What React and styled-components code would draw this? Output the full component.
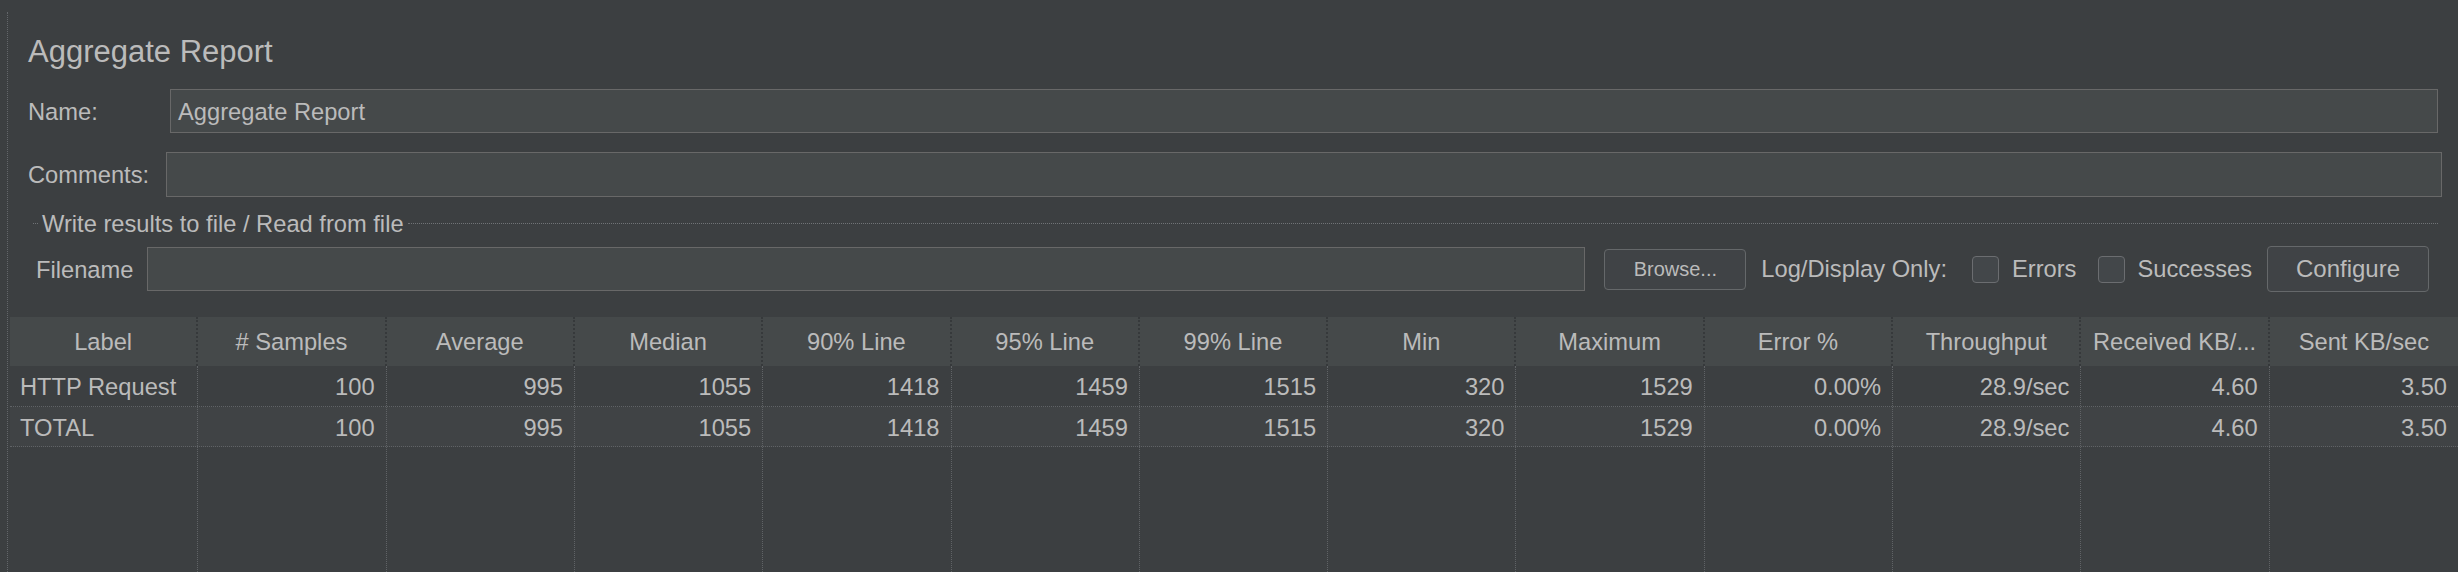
import React from 'react';
import styled, { createGlobalStyle } from 'styled-components';

const GlobalStyle = createGlobalStyle`
  html, body {
    margin: 0;
    padding: 0;
    background: #3c3f41;
  }
  body {
    font-family: "Liberation Sans", Arial, sans-serif;
    color: #bbbbbb;
  }
`;

const Page = styled.div`
  display: flex;
  height: 572px;
  padding: 12px 0 0 7px;
  box-sizing: border-box;
  overflow: hidden;
`;
const Panel = styled.div`
  flex: 1;
  display: flex;
  flex-direction: column;
  min-width: 0;
  border-left: 1px dotted #63666a;
`;
const Form = styled.div`
  display: flex;
  flex-direction: column;
  padding: 22px 0 0 20px;
`;
const Title = styled.div`
  height: 36px;
  font-size: 31px;
  line-height: 36px;
`;
const FieldRow = styled.div`
  display: flex;
  align-items: center;
  margin-top: ${(p) => p.$top}px;
  margin-right: ${(p) => p.$right}px;
  margin-left: ${(p) => p.$left || 0}px;
`;
const FieldLabel = styled.div`
  flex-shrink: 0;
  width: ${(p) => p.$width}px;
  padding-top: 2px;
  font-size: 23.7px;
  white-space: nowrap;
`;
const TextField = styled.div`
  flex: 1;
  display: flex;
  align-items: center;
  height: ${(p) => p.$height}px;
  box-sizing: border-box;
  padding: 2px 0 0 7px;
  background: #45494a;
  border: 1px solid #686868;
  font-size: 23.7px;
`;
const GroupTitle = styled.div`
  display: flex;
  align-items: center;
  height: 26px;
  margin-top: 13px;
  margin-right: 20px;
`;
const GroupDash = styled.div`
  width: 5px;
  margin-left: 5px;
  border-top: 1px dotted #707376;
`;
const GroupText = styled.div`
  margin: 0 4px;
  padding-top: 2px;
  font-size: 23.7px;
  line-height: 26px;
  white-space: nowrap;
`;
const GroupLine = styled.div`
  flex: 1;
  border-top: 1px dotted #707376;
`;
const Button = styled.div`
  flex-shrink: 0;
  display: flex;
  align-items: center;
  justify-content: center;
  width: ${(p) => p.$width}px;
  height: ${(p) => p.$height}px;
  margin-left: ${(p) => p.$left}px;
  box-sizing: border-box;
  background: #404346;
  border: 1px solid #65686a;
  border-radius: 4px;
  font-size: ${(p) => p.$size}px;
`;
const InlineText = styled.div`
  flex-shrink: 0;
  margin-left: ${(p) => p.$left}px;
  font-size: 23.7px;
  white-space: nowrap;
`;
const CheckBox = styled.div`
  flex-shrink: 0;
  width: 27px;
  height: 27px;
  margin-left: ${(p) => p.$left}px;
  box-sizing: border-box;
  background: #43474a;
  border: 1px solid #6b6d70;
  border-radius: 4px;
`;

const Table = styled.div`
  flex: 1;
  display: flex;
  flex-direction: column;
  margin: 25px 0 0 2px;
  min-height: 0;
`;
const Row = styled.div`
  display: grid;
  grid-template-columns: repeat(13, 1fr);
  flex-shrink: 0;
  height: ${(p) => p.$height}px;
  box-sizing: border-box;
  background: ${(p) => p.$bg || 'transparent'};
  border-bottom: ${(p) => (p.$line ? '1px dotted #606366' : 'none')};
`;
const Filler = styled(Row)`
  flex: 1;
  height: auto;
`;
const HeaderCell = styled.div`
  display: flex;
  align-items: center;
  justify-content: center;
  padding-top: 2px;
  background: #45494a;
  border-right: ${(p) => (p.$last ? 'none' : '2px dotted #36393b')};
  font-size: 23.7px;
  white-space: nowrap;
  overflow: hidden;
`;
const Cell = styled.div`
  display: flex;
  align-items: center;
  justify-content: ${(p) => (p.$left ? 'flex-start' : 'flex-end')};
  padding: 3px ${(p) => (p.$left ? 0 : 11)}px 0 ${(p) => (p.$left ? 10 : 0)}px;
  border-right: ${(p) => (p.$last ? 'none' : '1px dotted #606366')};
  font-size: 23.7px;
  white-space: nowrap;
  overflow: hidden;
`;

const columns = [
  'Label', '# Samples', 'Average', 'Median', '90% Line', '95% Line', '99% Line',
  'Min', 'Maximum', 'Error %', 'Throughput', 'Received KB/...', 'Sent KB/sec',
];

const rows = [
  ['HTTP Request', '100', '995', '1055', '1418', '1459', '1515', '320', '1529', '0.00%', '28.9/sec', '4.60', '3.50'],
  ['TOTAL', '100', '995', '1055', '1418', '1459', '1515', '320', '1529', '0.00%', '28.9/sec', '4.60', '3.50'],
];

export default function App() {
  return (
    <>
      <GlobalStyle />
      <Page>
        <Panel>
          <Form>
            <Title>Aggregate Report</Title>
            <FieldRow $top={19} $right={20}>
              <FieldLabel $width={142}>Name:</FieldLabel>
              <TextField $height={44}>Aggregate Report</TextField>
            </FieldRow>
            <FieldRow $top={19} $right={16}>
              <FieldLabel $width={138}>Comments:</FieldLabel>
              <TextField $height={45} />
            </FieldRow>
            <GroupTitle>
              <GroupDash />
              <GroupText>Write results to file / Read from file</GroupText>
              <GroupLine />
            </GroupTitle>
            <FieldRow $top={10} $right={29} $left={8}>
              <FieldLabel $width={111}>Filename</FieldLabel>
              <TextField $height={44} />
              <Button $width={142} $height={41} $left={19} $size={20}>Browse...</Button>
              <InlineText $left={15}>Log/Display Only:</InlineText>
              <CheckBox $left={25} />
              <InlineText $left={13}>Errors</InlineText>
              <CheckBox $left={22} />
              <InlineText $left={12}>Successes</InlineText>
              <Button $width={162} $height={46} $left={15} $size={24}>Configure</Button>
            </FieldRow>
          </Form>
          <Table>
            <Row $height={49}>
              {columns.map((c, i) => (
                <HeaderCell key={c} $last={i === columns.length - 1}>{c}</HeaderCell>
              ))}
            </Row>
            {rows.map((r, ri) => (
              <Row key={ri} $height={ri === 0 ? 41 : 40} $line $bg={ri === 1 ? '#404345' : ''}>
                {r.map((v, i) => (
                  <Cell key={i} $left={i === 0} $last={i === r.length - 1}>{v}</Cell>
                ))}
              </Row>
            ))}
            <Filler>
              {columns.map((c, i) => (
                <Cell key={c} $last={i === columns.length - 1} />
              ))}
            </Filler>
          </Table>
        </Panel>
      </Page>
    </>
  );
}
